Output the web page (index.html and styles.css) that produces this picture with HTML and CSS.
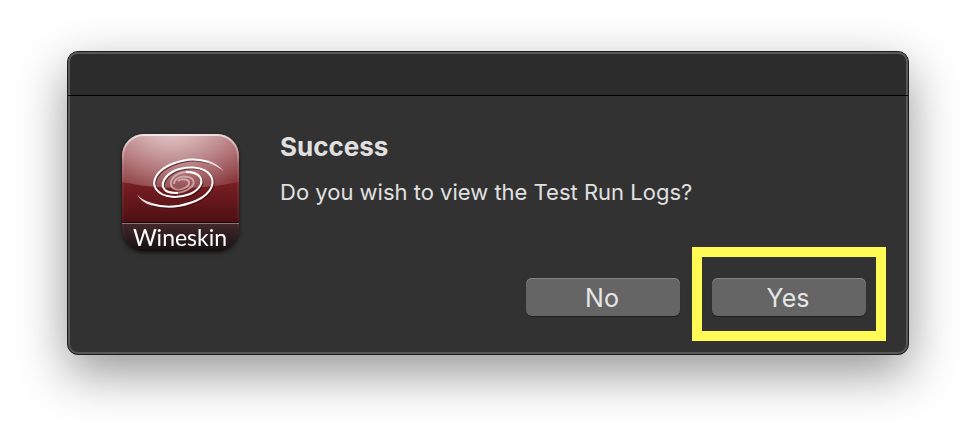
FILE: index.html
```html
<!DOCTYPE html>
<html lang="en">
<head>
<meta charset="utf-8">
<title>Success</title>
<link rel="stylesheet" href="styles.css">
</head>
<body>
<main class="dialog" role="alertdialog" aria-labelledby="title" aria-describedby="message">
  <header class="titlebar"></header>
  <div class="content">
    <svg class="app-icon" viewBox="118 130 126 126" role="img" aria-label="Wineskin">
      <defs>
        <clipPath id="tile"><rect x="122" y="134" width="117" height="117" rx="22"/></clipPath>
        <linearGradient id="wine" x1="0" y1="0" x2="0" y2="1">
          <stop offset="0" stop-color="#a85a5f"/><stop offset=".5" stop-color="#7c2025"/><stop offset="1" stop-color="#4c0f11"/>
        </linearGradient>
        <radialGradient id="gloss" gradientUnits="userSpaceOnUse" cx="172" cy="120" r="95">
          <stop offset="0" stop-color="#fff" stop-opacity=".72"/><stop offset="1" stop-color="#fff" stop-opacity=".06"/>
        </radialGradient>
        <linearGradient id="band" x1="0" y1="0" x2="0" y2="1">
          <stop offset="0" stop-color="#45292b"/><stop offset=".9" stop-color="#1a1214"/><stop offset="1" stop-color="#060508"/>
        </linearGradient>
        <linearGradient id="rim" x1="0" y1="0" x2="0" y2="1">
          <stop offset="0" stop-color="#fff" stop-opacity=".65"/><stop offset=".25" stop-color="#fff" stop-opacity=".08"/><stop offset="1" stop-color="#fff" stop-opacity="0"/>
        </linearGradient>
      </defs>
      <g clip-path="url(#tile)">
        <rect x="122" y="134" width="117" height="90" fill="url(#wine)"/>
        <path d="M122 134H239V182Q180 194 122 182Z" fill="url(#gloss)"/>
        <rect x="122" y="222" width="117" height="30" fill="url(#band)"/>
        <path d="M122 222.5H239" stroke="#1b0608"/>
        <path d="M122 223.5H239" stroke="#8d7476"/>
      </g>
      <rect x="123" y="135" width="115" height="115" rx="21" fill="none" stroke="url(#rim)" stroke-width="2"/>
      <g>
        <g class="swirl-shadow">
          <path d="M209 162C200 159 186 158 172 164C157 170 151 181 156 189C163 199 180 198 190 194C199 190 204 183 200 177"/>
          <path d="M151 204C161 207 176 208 190 203C209 197 216 185 211 176C204 165 184 166 174 171C164 176 160 185 165 190"/>
        </g>
        <g class="swirl-fade">
          <path d="M200 177C195 170 181 171 175 176C169 181 170 187 175 189C181 191 190 187 189 182C187 178 180 179 178 181"/>
          <path d="M165 190C171 195 184 193 190 188C196 184 194 178 188 177C181 175 174 179 174 184"/>
        </g>
        <g class="swirl-line">
          <path d="M200 177C204 183 199 190 190 194C180 198 163 199 156 189C151 181 157 170 172 164C186 158 200 159 209 162"/>
          <path d="M165 190C160 185 164 176 174 171C184 166 204 165 211 176C216 185 209 197 190 203C176 208 161 207 151 204"/>
          <path d="M200 177C197 173 191 172 186 172"/>
          <path d="M165 190C168 193 173 193 178 193"/>
        </g>
        <path class="swirl-tip" d="M208 160.6Q218 164 224 171.500Q216 165 208 163Z"/>
        <path class="swirl-tip" d="M152 203Q141 200 137 194Q141 203 152 205.400Z"/>
      </g>
      <text class="icon-name" x="180" y="246" text-anchor="middle">Wineskin</text>
    </svg>
    <div class="text">
      <h1 id="title">Success</h1>
      <p id="message">Do you wish to view the Test Run Logs?</p>
    </div>
  </div>
  <footer class="actions">
    <button type="button">No</button>
    <button type="button" class="highlighted">Yes</button>
  </footer>
</main>
</body>
</html>
```
FILE: styles.css
```css
* {
  box-sizing: border-box;
}

body {
  min-height: 100vh;
  margin: 0;
  padding: 51px 67px;
  background: #fff;
  font-family: Inter, "Liberation Sans", sans-serif;
  color: #e0e0e0;
}

.dialog {
  border: 1px solid #1c1c1c;
  border-radius: 11px;
  background: #323232;
  box-shadow: inset 0 0 0 2px #585858, 0 18px 50px rgba(0, 0, 0, .42);
}

.titlebar {
  height: 44px;
  border-bottom: 1px solid #000;
  border-radius: 10px 10px 0 0;
  background: #2c2c2c;
  box-shadow: inset 0 2px 0 #585858, inset 2px 0 0 #585858, inset -2px 0 0 #585858;
}

.content {
  display: flex;
  gap: 36px;
  padding: 34px 50px 0;
}

.app-icon {
  flex: none;
  width: 126px;
  height: 126px;
  filter: drop-shadow(0 2px 2px rgba(0, 0, 0, .6));
}

.text {
  flex: 1;
}

h1 {
  margin: 0;
  font-size: 26px;
  line-height: 34px;
  font-weight: 700;
}

p {
  margin: 12px 0 0;
  font-size: 22px;
  line-height: 32px;
}

.actions {
  display: flex;
  justify-content: flex-end;
  gap: 32px;
  padding: 22px 42px 38px;
}

button {
  position: relative;
  width: 154px;
  height: 38px;
  padding: 2px 2px 0 0;
  border: 0;
  border-radius: 6px;
  background: #656565;
  box-shadow: inset 0 1px 0 #838383, 0 1px 1px rgba(0, 0, 0, .4);
  color: #e6e6e6;
  font: 25px/36px Inter, "Liberation Sans", sans-serif;
}

.highlighted::after {
  content: "";
  position: absolute;
  inset: -31px -20px -25px;
  border: 10px solid #fffb54;
  pointer-events: none;
}

.swirl-shadow {
  fill: none;
  stroke: #30080a;
  stroke-opacity: .6;
  stroke-width: 2;
  transform: translate(1px, 1px);
}

.swirl-line {
  fill: none;
  stroke: #fff;
  stroke-width: 2;
}

.swirl-fade {
  fill: none;
  stroke: #e5cccd;
  stroke-opacity: .65;
  stroke-width: 2;
}

.swirl-tip {
  fill: #e9dada;
}

.icon-name {
  fill: #fff;
  font: 23px Lato, sans-serif;
}
```
